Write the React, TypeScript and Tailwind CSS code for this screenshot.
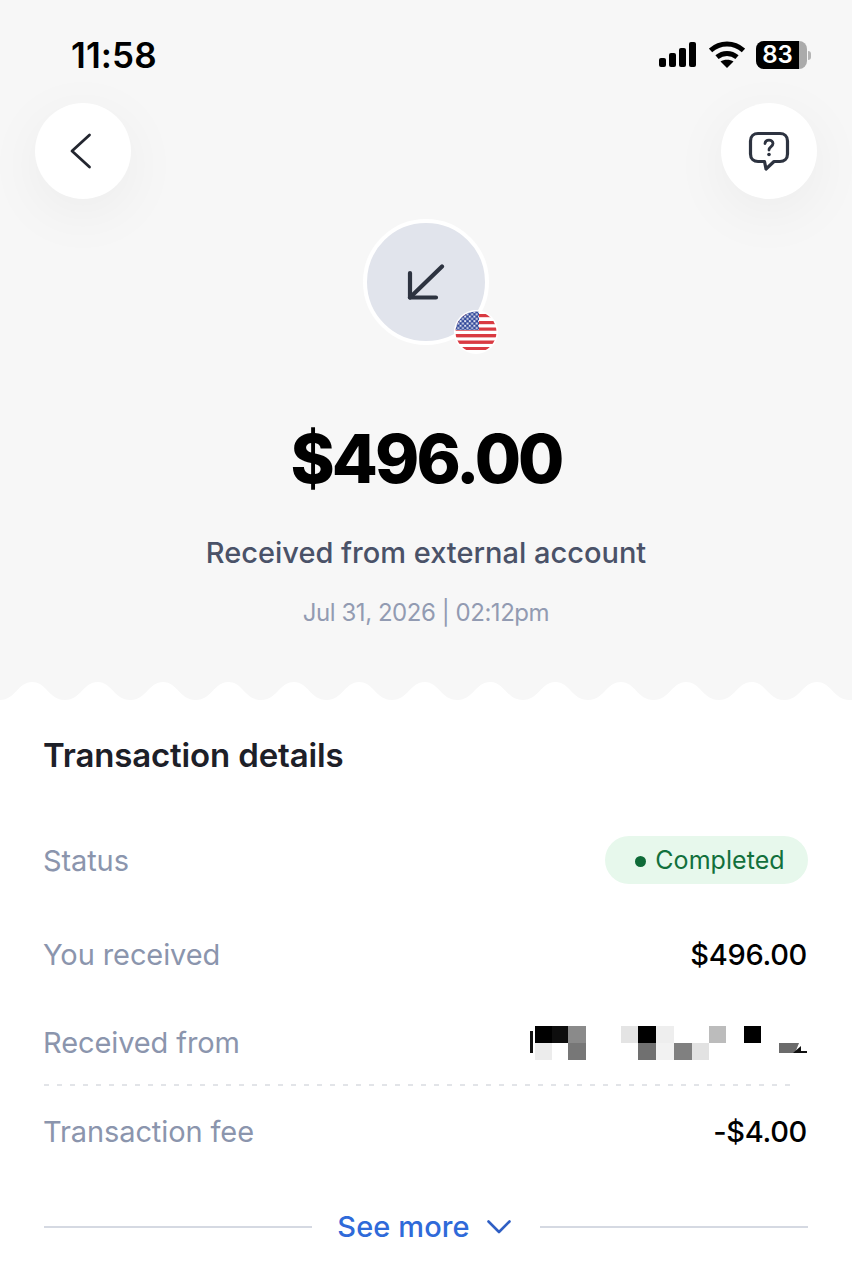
import React from 'react';

const font = "font-['Inter','Liberation_Sans',sans-serif]";

const Row = ({ label, children, className }: { label: string; children: React.ReactNode; className: string }) => (
  <div className={`flex items-center justify-between ${className}`}>
    <span className="-ml-[1px] pt-[2px] text-[29px] leading-[36px] text-[#8b95ad] tracking-[-0.1px]">{label}</span>
    {children}
  </div>
);

const SignalIcon = () => (
  <svg width="38" height="26" viewBox="0 0 38 26" fill="#000">
    <rect x="0" y="16" width="7" height="9" rx="2" />
    <rect x="10" y="11" width="7" height="14" rx="2" />
    <rect x="20" y="6" width="7" height="19" rx="2" />
    <rect x="30" y="0" width="7" height="25" rx="2" />
  </svg>
);

const WifiIcon = () => (
  <svg width="36" height="28" viewBox="0 0 36 28" fill="none" stroke="#000" strokeWidth="5">
    <path d="M1.5 9.5C11 0.8 25 0.8 34.5 9.5" />
    <path d="M8 16.2C14 11.2 22 11.2 28 16.2" />
    <path d="M18 27L11.5 20.6C15 18 21 18 24.5 20.6Z" fill="#000" stroke="none" />
  </svg>
);

const Battery = () => (
  <div className="flex items-center gap-[1px]">
    <div className="h-[28px] w-[51px] overflow-hidden rounded-[8px] bg-[#ababab]">
      <div className="flex h-full w-[43px] items-center justify-center bg-black text-[24px] font-semibold leading-none text-white">
        83
      </div>
    </div>
    <div className="h-[9px] w-[3px] rounded-r-full bg-[#b5b5b5]" />
  </div>
);

const BackIcon = () => (
  <svg width="22" height="36" viewBox="0 0 22 36" fill="none" stroke="#23262f" strokeWidth="2.8" strokeLinecap="round" strokeLinejoin="round">
    <path d="M19.5 2L2 18L19.5 34" />
  </svg>
);

const HelpIcon = () => (
  <svg width="42" height="40" viewBox="0 0 42 40" fill="none" stroke="#2d3340" strokeWidth="3.2" strokeLinejoin="round">
    <path d="M10 2.5H32C36 2.5 39.5 5 39.5 10V23C39.5 28 36 30.5 32 30.5H26L18 38L16.5 30.5H10C6 30.5 2.5 28 2.5 23V10C2.5 5 6 2.5 10 2.5Z" />
    <path d="M17 12.5C17.2 10.2 18.8 9.2 21 9.2C23.2 9.2 25 10.5 25 12.6C25 15.6 21 15.6 21 19" strokeLinecap="round" strokeWidth="2.8" />
    <circle cx="21" cy="23.5" r="1.8" fill="#2d3340" stroke="none" />
  </svg>
);

const ArrowIcon = () => (
  <svg width="38" height="36" viewBox="0 0 38 36" fill="none" stroke="#2d3340" strokeWidth="4.2" strokeLinecap="round" strokeLinejoin="round">
    <path d="M35 2.5L3 33.5" />
    <path d="M3 9V33.5H29" />
  </svg>
);

const UsFlag = () => (
  <svg width="42" height="42" viewBox="0 0 42 42">
    <defs>
      <clipPath id="flag-clip">
        <circle cx="21" cy="21" r="20.5" />
      </clipPath>
      <pattern id="stars" width="4.6" height="4.6" patternUnits="userSpaceOnUse">
        <rect width="2" height="2" fill="#fff" />
        <rect x="2.3" y="2.3" width="2" height="2" fill="#fff" />
      </pattern>
    </defs>
    <g clipPath="url(#flag-clip)">
      <rect width="42" height="42" fill="#fff" />
      <rect y="3" width="42" height="3.2" fill="#d93a42" />
      <rect y="10" width="42" height="3.2" fill="#d93a42" />
      <rect y="16.5" width="42" height="3.2" fill="#d93a42" />
      <rect y="23" width="42" height="3.4" fill="#d93a42" />
      <rect y="29.5" width="42" height="3.4" fill="#d93a42" />
      <rect y="36" width="42" height="3" fill="#d93a42" />
      <rect width="24" height="19" fill="#2f4699" />
      <rect width="24" height="19" fill="url(#stars)" opacity="0.85" />
    </g>
  </svg>
);

// scalloped top edge of the white sheet, one bump every 65.4px
const Scallops = () => {
  const bumps = Array.from({ length: 14 }, (_, i) => i * 65.4 - 65.8);
  const d =
    'M0 19 ' +
    bumps
      .map((x) => `L${x} 19 C${x + 16} 19 ${x + 18} 1 ${x + 32.7} 1 C${x + 47} 1 ${x + 49} 19 ${x + 65.4} 19`)
      .join(' ') +
    ' V20 H0 Z';
  return (
    <svg width="852" height="20" viewBox="0 0 852 20" className="block">
      <path d={d} fill="#fff" />
    </svg>
  );
};

const Mosaic = () => {
  const cells: [number, number, number, string][] = [
    [6, 0, 17, '#000'], [23, 0, 16, '#0e0e0e'], [39, 0, 18, '#8a8a8a'],
    [6, 17, 17, '#ececec'], [39, 17, 18, '#777'],
    [92, 0, 17, '#e4e4e4'], [109, 0, 18, '#000'], [127, 0, 18, '#eee'],
    [109, 17, 18, '#707070'], [127, 17, 18, '#f2f2f2'], [145, 17, 18, '#808080'], [163, 17, 17, '#e2e2e2'],
    [180, 0, 17, '#bcbcbc'], [215, 0, 17, '#000'],
  ];
  return (
    <svg width="279" height="36" viewBox="0 0 279 36">
      <g transform="translate(0 2)">
        {cells.map(([x, y, w, fill]) => (
          <rect key={`${x}-${y}`} x={x} y={y} width={w} height="17" fill={fill} />
        ))}
        <rect x="1" y="5" width="3" height="22" fill="#111" />
        <path d="M250 17H270L266 27H250Z" fill="#6b6b6b" />
        <path d="M264 27L272 20V25H278V27Z" fill="#111" />
      </g>
    </svg>
  );
};

export default function App() {
  return (
    <div className={`h-[1280px] w-[852px] overflow-hidden bg-white ${font}`}>
      <div className="h-[700px] bg-[#f7f7f7]">
        {/* Status bar */}
        <div className="flex items-center justify-between pl-[71px] pr-[41px] pt-[38px]">
          <span className="text-[35px] font-semibold leading-[34px] tracking-[0.1px] text-black">11:58</span>
          <div className="flex items-center">
            <SignalIcon />
            <div className="ml-[12px]">
              <WifiIcon />
            </div>
            <div className="ml-[11px]">
              <Battery />
            </div>
          </div>
        </div>

        {/* Nav buttons */}
        <div className="mt-[31px] flex justify-between px-[35px]">
          <button className="flex h-[96px] w-[96px] items-center justify-center rounded-full bg-white pr-[4px] shadow-[0_14px_60px_rgba(0,0,0,0.05)]">
            <BackIcon />
          </button>
          <button className="flex h-[96px] w-[96px] items-center justify-center rounded-full bg-white shadow-[0_14px_60px_rgba(0,0,0,0.05)]">
            <HelpIcon />
          </button>
        </div>

        {/* Transaction summary */}
        <div className="mt-[20px] flex flex-col items-center">
          <div className="relative h-[126px] w-[126px] rounded-full border-[4px] border-white bg-[#e1e4ec]">
            <div className="flex h-full w-full items-center justify-center">
              <ArrowIcon />
            </div>
            <div className="absolute left-[87px] top-[87px] rounded-full bg-white p-[1px]">
              <UsFlag />
            </div>
          </div>
          <div className="mt-[74px] text-[67px] font-extrabold leading-[80px] tracking-[-2.9px] text-black">$496.00</div>
          <div className="mt-[36px] text-[29px] font-medium leading-[36px] tracking-[0px] text-[#4a5268]">
            Received from external account
          </div>
          <div className="mt-[26px] text-[24px] leading-[32px] tracking-[-0.45px] text-[#929bb2]">Jul 31, 2026 | 02:12pm</div>
        </div>
      </div>

      {/* Details sheet */}
      <div className="relative px-[44px]">
        <div className="absolute left-0 top-[-19px]">
          <Scallops />
        </div>
        <h2 className="-ml-[1px] pt-[36px] text-[33px] font-semibold leading-[38px] tracking-[-0.15px] text-[#1d2028]">
          Transaction details
        </h2>

        <Row label="Status" className="mt-[62px] h-[48px]">
          <div className="flex h-[48px] w-[203px] items-center justify-center gap-[9px] rounded-full bg-[#e7f8ec] pl-[7px] pt-[2px] text-[25px] tracking-[0.05px] text-[#12703c]">
            <span className="h-[11px] w-[11px] rounded-full bg-[#0f6b38]" />
            Completed
          </div>
        </Row>
        <Row label="You received" className="mt-[52px] h-[36px]">
          <span className="mr-[1px] pt-[2px] text-[29px] font-medium tracking-[-0.3px] text-black">$496.00</span>
        </Row>
        <Row label="Received from" className="mt-[52px] h-[36px]">
          <Mosaic />
        </Row>

        <div className="mt-[24px] h-[2px] w-[752px] bg-[repeating-linear-gradient(90deg,#e2e4e8_0_5px,transparent_5px_13px)]" />

        <Row label="Transaction fee" className="mt-[27px] h-[36px]">
          <span className="mr-[1px] pt-[2px] text-[29px] font-medium tracking-[-0.3px] text-black">-$4.00</span>
        </Row>

        {/* See more */}
        <div className="mt-[60px] flex items-center">
          <div className="h-[2px] flex-1 bg-[#d5d9e2]" />
          <div className="flex w-[228px] items-center justify-center gap-[17px] pr-[4px] text-[29px] font-medium leading-[36px] tracking-[0.1px] text-[#2f6ad9]">
            See more
            <svg width="24" height="14" viewBox="0 0 24 14" fill="none" stroke="#2f5fc4" strokeWidth="2.6" strokeLinecap="round" strokeLinejoin="round">
              <path d="M1.5 1.5L12 12L22.5 1.5" />
            </svg>
          </div>
          <div className="h-[2px] flex-1 bg-[#d5d9e2]" />
        </div>
      </div>
    </div>
  );
}
